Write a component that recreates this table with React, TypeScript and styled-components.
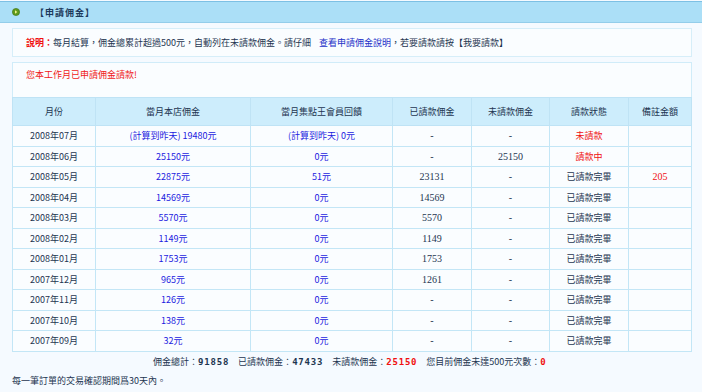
import React from "react";
import styled, { createGlobalStyle } from "styled-components";

const GlobalStyle = createGlobalStyle`
    body {
        margin: 0;
        background-color: #f5faff;
        font-family: "Noto Sans CJK TC", "Noto Sans", sans-serif;
        font-size: 9px;
        color: #1d3550;
    }
`;

interface Row {
    month: string;
    shop: string;
    shopNote?: boolean;
    member: string;
    paid: string;
    unpaid: string;
    status: string;
    statusRed?: boolean;
    memo?: string;
}

const rows: Row[] = [
    { month: "2008年07月", shop: "19480元", shopNote: true, member: "(計算到昨天) 0元", paid: "-", unpaid: "-", status: "未請款", statusRed: true },
    { month: "2008年06月", shop: "25150元", member: "0元", paid: "-", unpaid: "25150", status: "請款中", statusRed: true },
    { month: "2008年05月", shop: "22875元", member: "51元", paid: "23131", unpaid: "-", status: "已請款完畢", memo: "205" },
    { month: "2008年04月", shop: "14569元", member: "0元", paid: "14569", unpaid: "-", status: "已請款完畢" },
    { month: "2008年03月", shop: "5570元", member: "0元", paid: "5570", unpaid: "-", status: "已請款完畢" },
    { month: "2008年02月", shop: "1149元", member: "0元", paid: "1149", unpaid: "-", status: "已請款完畢" },
    { month: "2008年01月", shop: "1753元", member: "0元", paid: "1753", unpaid: "-", status: "已請款完畢" },
    { month: "2007年12月", shop: "965元", member: "0元", paid: "1261", unpaid: "-", status: "已請款完畢" },
    { month: "2007年11月", shop: "126元", member: "0元", paid: "-", unpaid: "-", status: "已請款完畢" },
    { month: "2007年10月", shop: "138元", member: "0元", paid: "-", unpaid: "-", status: "已請款完畢" },
    { month: "2007年09月", shop: "32元", member: "0元", paid: "-", unpaid: "-", status: "已請款完畢" },
];

const columns = [
    { label: "月份", width: 83 },
    { label: "當月本店佣金", width: 155 },
    { label: "當月集點王會員回饋", width: 142 },
    { label: "已請款佣金", width: 79 },
    { label: "未請款佣金", width: 78 },
    { label: "請款狀態", width: 79 },
    { label: "備註金額", width: 63 },
];

const App: React.FC = () => {
    return (
        <Page>
            <GlobalStyle />
            <TitleBar>
                <TitleIcon>
                    <svg width="8" height="8" viewBox="0 0 8 8">
                        <circle cx="4" cy="4" r="3.6" fill="#5f9a1c" stroke="#3f6e10" strokeWidth="0.6" />
                        <path d="M3 2.2 L5.3 4 L3 5.8 Z" fill="#f3f08a" />
                    </svg>
                </TitleIcon>
                <TitleText>【申請佣金】</TitleText>
            </TitleBar>

            <Content>
                <NoteBox>
                    <NoteLabel>說明：</NoteLabel>
                    每月結算，佣金總累計超過500元，自動列在未請款佣金。請仔細
                    <NoteLink href="#">查看申請佣金說明</NoteLink>
                    ，若要請款請按【我要請款】
                </NoteBox>

                <MainBox>
                    <Notice>您本工作月已申請佣金請款!</Notice>
                    <Table>
                        <colgroup>
                            {columns.map(col => <col key={col.label} style={{ width: col.width }} />)}
                        </colgroup>
                        <thead>
                            <tr>
                                {columns.map(col => <Th key={col.label}>{col.label}</Th>)}
                            </tr>
                        </thead>
                        <tbody>
                            {rows.map(row => (
                                <tr key={row.month}>
                                    <Td>{row.month}</Td>
                                    <Td $tone="blue">{row.shopNote ? `(計算到昨天) ${row.shop}` : row.shop}</Td>
                                    <Td $tone="blue">{row.member}</Td>
                                    <Td $serif>{row.paid}</Td>
                                    <Td $serif>{row.unpaid}</Td>
                                    <Td $tone={row.statusRed ? "red" : undefined}>{row.status}</Td>
                                    <Td $serif $tone="red">{row.memo}</Td>
                                </tr>
                            ))}
                        </tbody>
                    </Table>
                </MainBox>

                <Totals>
                    <span>佣金總計：<Amount>91858</Amount></span>
                    <span>已請款佣金：<Amount>47433</Amount></span>
                    <span>未請款佣金：<Amount $red>25150</Amount></span>
                    <span>您目前佣金未達500元次數：<Amount $red>0</Amount></span>
                </Totals>

                <Footer>每一筆訂單的交易確認期間爲30天內。</Footer>
            </Content>
        </Page>
    );
};

const Page = styled.div`
    width: 702px;
    min-height: 392px;
`;

const TitleBar = styled.div`
    display: flex;
    align-items: center;
    height: 20px;
    margin-top: 1px;
    border-top: 1px solid #7dc0e4;
    border-bottom: 1px solid #93cdea;
    background-color: #abdff7;
`;

const TitleIcon = styled.span`
    display: flex;
    margin-left: 12px;
`;

const TitleText = styled.span`
    margin-left: 15px;
    font-weight: bold;
    font-size: 9px;
    letter-spacing: 1px;
    color: #1c3a5c;
`;

const Content = styled.div`
    padding: 5px 10px 0 12px;
`;

const NoteBox = styled.div`
    display: flex;
    align-items: center;
    height: 27px;
    padding-left: 13px;
    border: 1px solid #d6eef9;
    background-color: #fafdff;
    white-space: nowrap;
`;

const NoteLabel = styled.span`
    font-weight: bold;
    color: #f01010;
`;

const NoteLink = styled.a`
    margin-left: 8px;
    color: #2230c8;
    text-decoration: none;
`;

const MainBox = styled.div`
    margin-top: 5px;
    border: 1px solid #d0ecf9;
    border-bottom: none;
    background-color: #fafdff;
`;

const Notice = styled.div`
    height: 34px;
    padding: 5px 0 0 13px;
    box-sizing: border-box;
    color: #f01818;
`;

const Table = styled.table`
    width: calc(100% + 1px);
    margin-left: -1px;
    border-collapse: collapse;
    table-layout: fixed;
`;

const Th = styled.th`
    height: 27px;
    padding: 0;
    border: 1px solid #bfe3f5;
    background-color: #cdedfc;
    font-weight: normal;
    color: #1d3550;
    text-align: center;
`;

const toneColors: Record<string, string> = {
    blue: "#1a1ae0",
    red: "#f01010",
};

const Td = styled.td<{ $tone?: "blue" | "red"; $serif?: boolean }>`
    height: 19.5px;
    padding: 0;
    border: 1px solid #c3e6f6;
    text-align: center;
    white-space: nowrap;
    color: ${({ $tone }) => ($tone ? toneColors[$tone] : "#1d3550")};
    font-family: ${({ $serif }) =>
        $serif ? `"Liberation Serif", "Noto Sans CJK TC", serif` : `"Noto Sans CJK TC", "Noto Sans", sans-serif`};
    font-size: ${({ $serif }) => ($serif ? "10px" : "9px")};
`;

const Totals = styled.div`
    display: flex;
    gap: 9px;
    margin-top: 3px;
    padding-left: 141px;
    height: 14px;
    align-items: center;
`;

const Amount = styled.b<{ $red?: boolean }>`
    font-family: "DejaVu Sans Mono", monospace;
    font-size: 9px;
    letter-spacing: 0.8px;
    color: ${({ $red }) => ($red ? "#f01010" : "#1d3550")};
`;

const Footer = styled.div`
    margin-top: 5px;
`;

export default App;
